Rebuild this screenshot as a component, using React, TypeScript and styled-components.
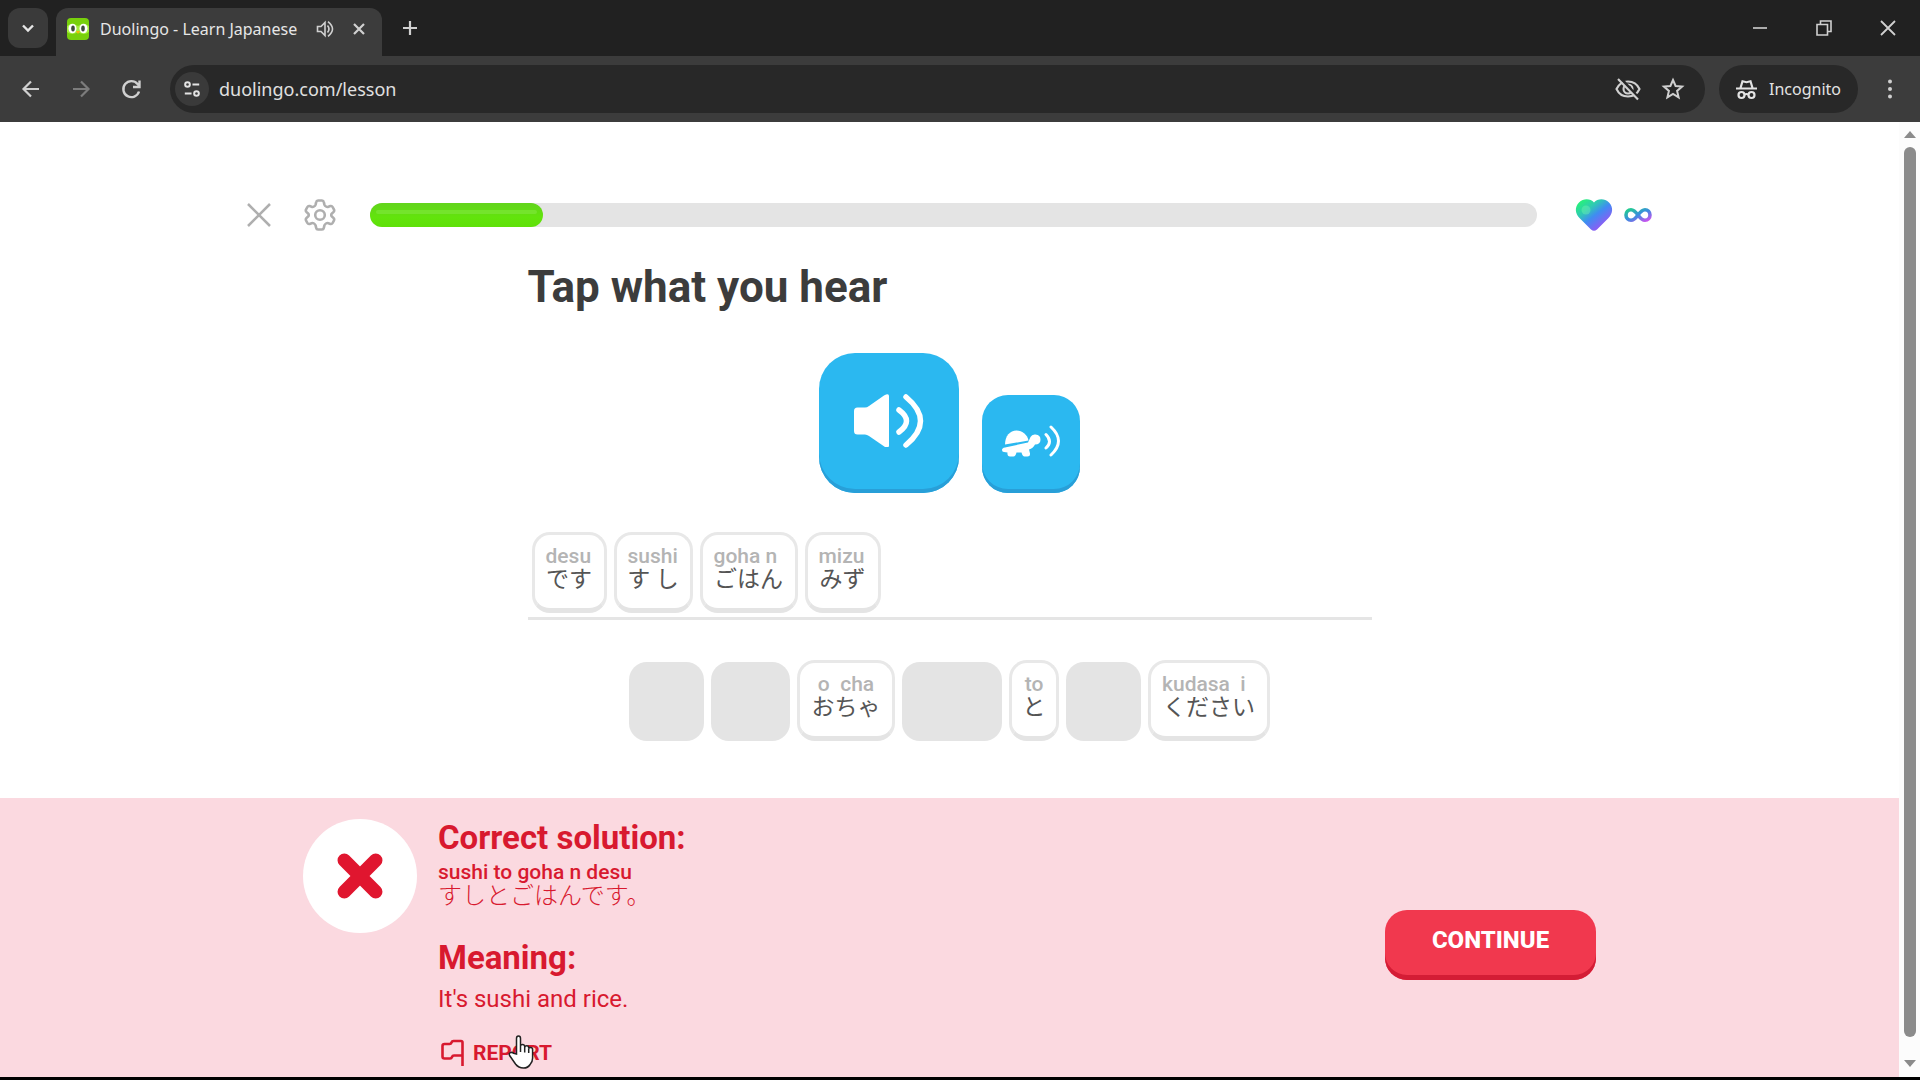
import React from "react";
import styled, { createGlobalStyle } from "styled-components";

const ui = `"Noto Sans", "Open Sans", sans-serif`;
const din = `Roboto, "Noto Sans CJK JP", sans-serif`;

const Global = createGlobalStyle`
  * { box-sizing: border-box; }
  html, body { margin: 0; background: #000; }
  button { border: 0; padding: 0; margin: 0; background: none; font: inherit; color: inherit; cursor: pointer; }
  svg { display: block; flex: none; }
  h1, h2, p { margin: 0; }
`;

const Shell = styled.div`
  display: flex;
  flex-direction: column;
  min-height: 100vh;
  border-bottom: 3px solid #000;
  background: #fff;
  font-family: ${din};
`;

/* Browser chrome */
const TabStrip = styled.header`
  display: flex;
  align-items: center;
  height: 56px;
  padding: 0 20px 0 8px;
  background: #212121;
  color: #e6e6e6;
  font-family: ${ui};
`;
const TabSearch = styled.button`
  display: grid;
  place-items: center;
  width: 40px;
  height: 40px;
  border-radius: 12px;
  background: #3a3a3a;
`;
const Tab = styled.div`
  display: flex;
  align-items: center;
  align-self: flex-end;
  width: 326px;
  height: 48px;
  margin-left: 8px;
  padding: 0 16px 6px 10px;
  border-radius: 12px 12px 0 0;
  background: #3c3c3c;
`;
const TabTitle = styled.span`
  flex: 1;
  min-width: 0;
  margin: 0 8px 0 10px;
  white-space: nowrap;
  font-size: 16px;
  line-height: 24px;
`;
const TabTools = styled.div`
  display: flex;
  align-items: center;
  gap: 18px;
`;
const IconButton = styled.button<{ $dim?: boolean }>`
  display: grid;
  place-items: center;
  color: ${(p) => (p.$dim ? "#7c7c7c" : "#d0d0d0")};
`;
const NewTab = styled(IconButton)`
  width: 40px;
  height: 40px;
  margin-left: 8px;
`;
const WindowControls = styled.div`
  display: flex;
  gap: 48px;
  margin-left: auto;
  padding-right: 4px;
`;
const Toolbar = styled.div`
  display: flex;
  align-items: center;
  height: 66px;
  padding: 0 18px 0 19px;
  background: #3c3c3c;
  color: #e3e3e3;
  font-family: ${ui};
`;
const NavButtons = styled.nav`
  display: flex;
  gap: 26px;
  margin-right: 27px;
`;
const AddressBar = styled.div`
  display: flex;
  flex: 1;
  align-items: center;
  height: 48px;
  padding: 0 20px 0 5px;
  border-radius: 24px;
  background: #282828;
`;
const SiteInfo = styled.button`
  display: grid;
  place-items: center;
  width: 34px;
  height: 34px;
  border-radius: 50%;
  background: #3a3a3a;
`;
const Address = styled.input`
  flex: 1;
  min-width: 0;
  margin-left: 10px;
  padding: 0;
  border: 0;
  outline: 0;
  background: none;
  color: #e0e0e0;
  font-family: ${ui};
  font-size: 18px;
  line-height: 24px;
`;
const AddressTools = styled.div`
  display: flex;
  gap: 20px;
`;
const Incognito = styled.button`
  display: flex;
  align-items: center;
  gap: 12px;
  height: 48px;
  margin: 0 20px 0 14px;
  padding: 0 17px;
  border-radius: 24px;
  background: #282828;
  font-size: 16px;
`;

/* Page */
const Viewport = styled.div`
  display: flex;
  flex: 1;
`;
const Page = styled.div`
  display: flex;
  flex: 1;
  flex-direction: column;
  min-width: 0;
`;
const Scrollbar = styled.div`
  display: flex;
  flex-direction: column;
  align-items: center;
  width: 21px;
  padding: 9px 0 10px;
  gap: 8px;
  background: #fcfcfc;
`;
const Thumb = styled.div`
  flex: 1;
  width: 12px;
  margin-bottom: 14px;
  border-radius: 6px;
  background: #8b8b8b;
`;
const LessonBar = styled.div`
  display: flex;
  align-items: center;
  width: 100%;
  max-width: 1405px;
  margin: 0 auto;
  padding-top: 76px;
  color: #afafaf;
`;
const Gear = styled(IconButton)`
  margin: 0 34px 0 33px;
  color: #afafaf;
`;
const CloseLesson = styled(IconButton)`
  color: #afafaf;
`;
const Progress = styled.div`
  flex: 1;
  height: 24px;
  border-radius: 12px;
  background: #e4e4e4;
`;
const Fill = styled.div`
  height: 24px;
  padding: 7px 6px;
  border-radius: 12px;
  background: linear-gradient(#62d41c, #62e40c 60%, #5fe009);
`;
const Shine = styled.div`
  height: 4px;
  border-radius: 2px;
  background: #74e42c;
`;
const Health = styled.div`
  display: flex;
  align-items: center;
  gap: 10px;
  margin-left: 37px;
`;
const Challenge = styled.main`
  display: flex;
  flex: 1;
  flex-direction: column;
  width: 100%;
  max-width: 844px;
  margin: 0 auto;
`;
const Prompt = styled.h1`
  margin-top: 27px;
  color: #3c3c3c;
  font-size: 44px;
  font-weight: 700;
  line-height: 56px;
`;
const Speakers = styled.div`
  display: flex;
  align-items: flex-end;
  justify-content: center;
  gap: 23px;
  margin-top: 38px;
`;
const Speaker = styled.button<{ $size: number }>`
  display: grid;
  place-items: center;
  width: ${(p) => p.$size}px;
  height: ${(p) => p.$size}px;
  padding-bottom: 5px;
  border-radius: ${(p) => (p.$size > 100 ? 36 : 26)}px;
  background: #2bb8f0;
  box-shadow: inset 0 -4px #289fd8;
  color: #fff;
`;
const Answer = styled.div`
  display: flex;
  gap: 7px;
  margin-top: 39px;
  padding: 0 4px 4px;
  border-bottom: 3px solid #e5e5e5;
`;
const Bank = styled.div`
  display: flex;
  justify-content: center;
  gap: 7px;
  margin-top: 40px;
`;
const Tile = styled.button<{ $w: number }>`
  display: flex;
  flex-direction: column;
  align-items: flex-start;
  width: ${(p) => p.$w}px;
  height: 81px;
  padding: 10px 11px 0;
  border: 3px solid #e8e8e8;
  border-bottom: 5px solid #e4e4e4;
  border-radius: 18px;
  background: #fff;
  white-space: pre;
`;
const Ghost = styled.div<{ $w: number }>`
  width: ${(p) => p.$w}px;
  height: 79px;
  margin-top: 2px;
  border-radius: 18px;
  background: #e4e4e4;
`;
const Romaji = styled.span<{ $center?: boolean }>`
  align-self: ${(p) => (p.$center ? "center" : "flex-start")};
  color: #b4b4b4;
  font-size: 21px;
  font-weight: 500;
  line-height: 22px;
`;
const Kana = styled.span`
  align-self: center;
  color: #555;
  font-size: 23px;
  line-height: 26px;
`;

/* Result panel */
const Result = styled.footer`
  background: #fbd9e0;
  color: #d8192f;
`;
const ResultInner = styled.div`
  display: flex;
  width: 100%;
  max-width: 1293px;
  min-height: 279px;
  margin: 0 auto;
  padding: 21px 0 6px;
`;
const Badge = styled.div`
  display: grid;
  flex: none;
  place-items: center;
  width: 114px;
  height: 114px;
  border-radius: 50%;
  background: #fff;
`;
const Solution = styled.div`
  flex: 1;
  margin-left: 21px;
`;
const Heading = styled.h2`
  font-size: 33px;
  font-weight: 700;
  line-height: 38px;
`;
const Reading = styled.p`
  margin-top: 4px;
  font-size: 21px;
  font-weight: 500;
  line-height: 22px;
`;
const KanaLine = styled.p`
  margin-bottom: 30px;
  font-size: 24px;
  font-weight: 300;
  line-height: 26px;
`;
const Meaning = styled.p`
  margin-top: 8px;
  font-size: 24px;
  line-height: 28px;
`;
const Report = styled.button`
  position: relative;
  display: flex;
  align-items: center;
  gap: 9px;
  margin: 26px 0 0 3px;
  font-size: 21px;
  font-weight: 700;
  line-height: 28px;
`;
const Pointer = styled.span`
  position: absolute;
  top: -4px;
  left: 67px;
`;
const Continue = styled.button`
  align-self: flex-start;
  width: 211px;
  height: 70px;
  margin-top: 91px;
  padding-bottom: 10px;
  border-radius: 22px;
  background: #f1384e;
  box-shadow: inset 0 -5px #d41c35;
  color: #fff;
  font-size: 24px;
  font-weight: 800;
`;

type Word = { romaji?: string; kana?: string; width: number; centered?: boolean };

const answer: Word[] = [
  { romaji: "desu", kana: "です", width: 75 },
  { romaji: "sushi", kana: "す し", width: 79 },
  { romaji: "goha n", kana: "ごはん", width: 98 },
  { romaji: "mizu", kana: "みず", width: 76 },
];
const bank: Word[] = [
  { width: 75 },
  { width: 79 },
  { romaji: "o  cha", kana: "おちゃ", width: 98, centered: true },
  { width: 100 },
  { romaji: "to", kana: "と", width: 50, centered: true },
  { width: 75 },
  { romaji: "kudasa  i", kana: "ください", width: 122 },
];

function WordTile({ word }: { word: Word }) {
  if (!word.kana) return <Ghost $w={word.width} />;
  return (
    <Tile $w={word.width}>
      <Romaji $center={word.centered}>{word.romaji}</Romaji>
      <Kana lang="ja">{word.kana}</Kana>
    </Tile>
  );
}

type StrokeProps = { w: number; h?: number; box: string; sw?: number; children: React.ReactNode };
const Stroke = ({ w, h = w, box, sw = 2, children }: StrokeProps) => (
  <svg width={w} height={h} viewBox={box} fill="none" stroke="currentColor" strokeWidth={sw} aria-hidden="true">
    {children}
  </svg>
);

const Favicon = () => (
  <svg width="24" height="24" viewBox="0 0 24 24" aria-hidden="true">
    <rect x="1" y="1" width="22" height="22" rx="4" fill="#78d00c" />
    <path d="M1 9q5-4 11 0 6-4 11 0v6q-5 4-11 0-6 4-11 0z" fill="#a4ee3c" />
    <ellipse cx="6.5" cy="11.5" rx="4" ry="4.8" fill="#fff" />
    <ellipse cx="17.5" cy="11.5" rx="4" ry="4.8" fill="#fff" />
    <ellipse cx="7" cy="11.5" rx="1.8" ry="3" fill="#3f4a3c" />
    <ellipse cx="17" cy="11.5" rx="1.8" ry="3" fill="#3f4a3c" />
    <path d="M10 14h4l-2 3z" fill="#f5b80a" />
  </svg>
);

const HandPointer = () => (
  <svg width="27" height="35" viewBox="0 0 27 35" aria-hidden="true">
    <path
      d="M8.500 19V3.500Q8.500 1 10.500 1t2 2.500V11q0-1.500 2-1.500t2.200 2v.5q.3-1.300 2-1.300 2 0 2 2v.8q.4-1 1.900-1 2 0 2 2.200V23q0 4-2.500 6.500Q20 33 15.500 33 10.500 33 7.500 29L1.600 20.500Q.6 18.500 2.500 17.600q1.700-.7 3.300.8z"
      fill="#fff"
      stroke="#222"
      strokeWidth="1.5"
    />
    <path d="M12.500 11v6M16.700 12v5.500M20.700 13.500V18" stroke="#222" strokeWidth="1.5" fill="none" />
  </svg>
);

export default function App() {
  return (
    <Shell>
      <Global />
      <TabStrip>
        <TabSearch aria-label="Search tabs">
          <Stroke w={14} box="0 0 14 14" sw={2.4}><path d="M2 4.500l5 5 5-5" /></Stroke>
        </TabSearch>
        <Tab>
          <Favicon />
          <TabTitle>Duolingo - Learn Japanese</TabTitle>
          <TabTools>
            <IconButton aria-label="Mute tab">
              <Stroke w={18} box="0 0 18 18" sw={1.6}>
                <path d="M1.500 6.500v5H5l4 4v-13l-4 4z" />
                <path d="M11.500 5.500q3 3.500 0 7M12 1.700q9 7.300 0 14.600" />
              </Stroke>
            </IconButton>
            <IconButton aria-label="Close tab">
              <Stroke w={14} box="0 0 14 14" sw={2.2}><path d="M2 2l10 10M12 2L2 12" /></Stroke>
            </IconButton>
          </TabTools>
        </Tab>
        <NewTab aria-label="New tab">
          <Stroke w={16} box="0 0 16 16" sw={2.2}><path d="M8 1v14M1 8h14" /></Stroke>
        </NewTab>
        <WindowControls>
          <IconButton aria-label="Minimize">
            <Stroke w={16} box="0 0 16 16" sw={1.6}><path d="M1 8h14" /></Stroke>
          </IconButton>
          <IconButton aria-label="Restore">
            <Stroke w={16} box="0 0 16 16" sw={1.6}>
              <path d="M1 4.500h10.500V15H1zM4.500 4V1H15v10.500h-3" />
            </Stroke>
          </IconButton>
          <IconButton aria-label="Close window">
            <Stroke w={16} box="0 0 16 16" sw={1.8}><path d="M1 1l14 14M15 1L1 15" /></Stroke>
          </IconButton>
        </WindowControls>
      </TabStrip>
      <Toolbar>
        <NavButtons>
          <IconButton aria-label="Back">
            <Stroke w={24} box="0 0 24 24" sw={2.2}><path d="M20 12H4.500M12 4.500L4.500 12l7.500 7.500" /></Stroke>
          </IconButton>
          <IconButton aria-label="Forward" $dim>
            <Stroke w={24} box="0 0 24 24" sw={2.2}><path d="M4 12h15.500M12 4.500l7.500 7.500-7.500 7.500" /></Stroke>
          </IconButton>
          <IconButton aria-label="Reload">
            <Stroke w={24} box="0 0 24 24" sw={2.4}>
              <path d="M20 14.500A8 8 0 1 1 18.500 7l2 2M20.500 3.500V10H14" />
            </Stroke>
          </IconButton>
        </NavButtons>
        <AddressBar>
          <SiteInfo aria-label="View site information">
            <Stroke w={18} box="0 0 20 20" sw={2.2}>
              <circle cx="5" cy="5" r="2.6" />
              <path d="M10.500 5H18M2 15h7.500" />
              <circle cx="15" cy="15" r="2.6" />
            </Stroke>
          </SiteInfo>
          <Address aria-label="Address and search bar" defaultValue="duolingo.com/lesson" />
          <AddressTools>
            <IconButton aria-label="Third-party cookies blocked">
              <Stroke w={26} box="0 0 26 26" sw={2.1}>
                <path d="M1.500 13Q5 5.500 13 5.500T24.500 13Q21 20.500 13 20.500T1.500 13z" />
                <circle cx="13" cy="13" r="4.5" />
                <path d="M5 1.500L24.500 23" stroke="#282828" strokeWidth="3" />
                <path d="M3 3l20 20.500" />
              </Stroke>
            </IconButton>
            <IconButton aria-label="Bookmark this tab">
              <Stroke w={24} box="0 0 24 24" sw={2}>
                <path d="M12 3l2.600 6 6.500.600-5 4.300 1.500 6.400-5.600-3.400-5.600 3.400 1.500-6.400-5-4.300 6.500-.600z" />
              </Stroke>
            </IconButton>
          </AddressTools>
        </AddressBar>
        <Incognito>
          <Stroke w={21} box="0 0 21 21" sw={2.2}>
            <path d="M0 9.500h21M4.500 9L6.500 2.200l4 1 4-1 2 6.800" />
            <circle cx="5.5" cy="16" r="3" />
            <circle cx="15.5" cy="16" r="3" />
            <path d="M8.500 15.500q2-1 4 0" />
          </Stroke>
          Incognito
        </Incognito>
        <IconButton aria-label="Browser menu">
          <svg width="24" height="24" viewBox="0 0 24 24" fill="currentColor" aria-hidden="true">
            <circle cx="12" cy="4.5" r="2" />
            <circle cx="12" cy="12" r="2" />
            <circle cx="12" cy="19.5" r="2" />
          </svg>
        </IconButton>
      </Toolbar>
      <Viewport>
        <Page>
          <LessonBar>
            <CloseLesson aria-label="Quit lesson">
              <Stroke w={24} box="0 0 24 24" sw={2.5}><path d="M1 1l22 22M23 1L1 23" /></Stroke>
            </CloseLesson>
            <Gear aria-label="Settings">
              <Stroke w={32} box="0 0 32 32" sw={2.6}>
                <path
                  strokeLinejoin="round"
                  d="M14 1.500h4q1.500 0 1.800 1.500l.6 2.600q.4 1.200 1.600 1.900 1.200.7 2.400.3l2-.7q1.500-.4 2.200.9l1.300 2.400q.7 1.300-.3 2.400l-1.500 1.500q-.9.800-.9 1.700t.9 1.700l1.500 1.500q1 1.100.3 2.400l-1.300 2.400q-.7 1.300-2.200.9l-2-.7q-1.200-.4-2.400.3-1.200.7-1.600 1.900l-.6 2.600q-.3 1.500-1.800 1.500h-4q-1.500 0-1.800-1.500l-.6-2.600q-.4-1.200-1.600-1.900-1.200-.7-2.400-.3l-2 .7q-1.500.4-2.200-.9l-1.300-2.400q-.7-1.300.3-2.400l1.500-1.500q.9-.8.9-1.700t-.9-1.700l-1.500-1.500q-1-1.100-.3-2.400l1.300-2.400q.7-1.300 2.200-.9l2 .7q1.200.4 2.400-.3 1.200-.7 1.600-1.900l.6-2.600q.3-1.500 1.800-1.500z"
                />
                <circle cx="16" cy="16" r="4.8" />
              </Stroke>
            </Gear>
            <Progress role="progressbar" aria-label="Lesson progress" aria-valuenow={15}>
              <Fill style={{ width: "14.8%" }}><Shine /></Fill>
            </Progress>
            <Health>
              <svg width="40" height="34" viewBox="0 0 40 34" aria-hidden="true">
                <defs>
                  <linearGradient id="heart" x1="0.1" y1="0.1" x2="0.8" y2="0.9">
                    <stop offset="0" stopColor="#28f07c" />
                    <stop offset="0.3" stopColor="#2fc9b4" />
                    <stop offset="0.55" stopColor="#3f8cf2" />
                    <stop offset="1" stopColor="#a050f4" />
                  </linearGradient>
                </defs>
                <path
                  d="M20 4.500C23.500.5 30.500 0 35 4.500s4 11-.5 15.500L23 31.500q-3 2.500-6 0L5.500 20C1 15.500.5 9 5 4.500S16.500.5 20 4.500z"
                  fill="url(#heart)"
                />
                <circle cx="12" cy="12" r="4.5" fill="#7dffb0" opacity="0.35" />
              </svg>
              <svg width="28" height="16" viewBox="0 0 28 16" fill="none" aria-hidden="true">
                <defs>
                  <linearGradient id="loop" x1="0" y1="0" x2="1" y2="1">
                    <stop offset="0" stopColor="#20d08c" />
                    <stop offset="0.5" stopColor="#3a8ce0" />
                    <stop offset="1" stopColor="#d050f0" />
                  </linearGradient>
                </defs>
                <path
                  d="M14 8C11.500 4.500 10 2.700 7 2.700a5 5.300 0 0 0 0 10.600c3 0 4.500-1.800 7-5.300s4-5.300 7-5.300a5 5.300 0 0 1 0 10.600C18 13.300 16.500 11.500 14 8z"
                  stroke="url(#loop)"
                  strokeWidth="3.6"
                />
              </svg>
            </Health>
          </LessonBar>
          <Challenge>
            <Prompt>Tap what you hear</Prompt>
            <Speakers>
              <Speaker $size={140} aria-label="Play audio">
                <svg width="70" height="54" viewBox="0 0 70 54" fill="none" aria-hidden="true">
                  <path
                    d="M0 17q0-3.500 3.500-3.500H11q2 0 4-1.500L30 1.500Q35-1 35 2v50q0 1-1 1h-3L15 42q-2-1.500-4-1.500H3.500Q0 40.500 0 37z"
                    fill="#fff"
                  />
                  <path d="M45 16q15 11 0 22M52 3q29 24 0 48" stroke="#fff" strokeWidth="5.5" strokeLinecap="round" />
                </svg>
              </Speaker>
              <Speaker $size={98} aria-label="Play audio slowly">
                <svg width="60" height="34" viewBox="0 0 60 34" fill="none" aria-hidden="true">
                  <path d="M4 19.500C4 11 9 5.500 15.500 5.500c6 0 11 4.500 12 10z" fill="#fff" />
                  <path
                    d="M1 25q0-2 3-2.500L27 17.500 29.500 12q1.500-3 5-2.500 5 .5 5 5.200 0 4.500-5.500 4.800-2 4-6 5l1 4q.5 3-2.500 3h-3q-2 0-3-4h-5q-1 4-3 4H9q-3 0-2.500-4l-3.500-.5Q1 27 1 25z"
                    fill="#fff"
                  />
                  <path d="M45 9.500q7 7 0 13.500M50 2q15 14 0 28" stroke="#fff" strokeWidth="3" strokeLinecap="round" />
                </svg>
              </Speaker>
            </Speakers>
            <Answer>
              {answer.map((w, i) => <WordTile key={i} word={w} />)}
            </Answer>
            <Bank>
              {bank.map((w, i) => <WordTile key={i} word={w} />)}
            </Bank>
          </Challenge>
          <Result>
            <ResultInner>
              <Badge>
                <Stroke w={46} box="0 0 44 44" sw={13}>
                  <path d="M7 7l30 30M37 7L7 37" stroke="#e0162f" strokeLinecap="round" />
                </Stroke>
              </Badge>
              <Solution>
                <Heading>Correct solution:</Heading>
                <Reading>sushi to goha n desu</Reading>
                <KanaLine lang="ja">すしとごはんです。</KanaLine>
                <Heading>Meaning:</Heading>
                <Meaning>It's sushi and rice.</Meaning>
                <Report>
                  <Stroke w={23} h={28} box="0 0 23 28" sw={2.6}>
                    <path strokeLinejoin="round" d="M21.500 27V3.500q0-1.500-1.500-1.500H12.500q-1.500 0-2 1.500T8.500 5H3.500Q1.500 5 1.500 7v10.500q0 2 2 2H9q1.500 0 2-1.500t2-1.500h8.500" />
                  </Stroke>
                  REPORT
                  <Pointer><HandPointer /></Pointer>
                </Report>
              </Solution>
              <Continue>CONTINUE</Continue>
            </ResultInner>
          </Result>
        </Page>
        <Scrollbar aria-hidden="true">
          <svg width="14" height="8" viewBox="0 0 14 8"><path d="M1 7l6-7 6 7z" fill="#8b8b8b" /></svg>
          <Thumb />
          <svg width="14" height="8" viewBox="0 0 14 8"><path d="M1 1l6 7 6-7z" fill="#8b8b8b" /></svg>
        </Scrollbar>
      </Viewport>
    </Shell>
  );
}
